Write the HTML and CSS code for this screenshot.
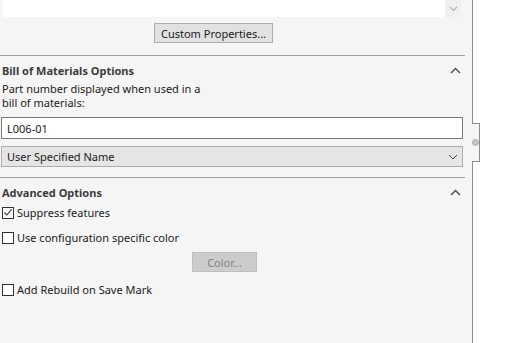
FILE: index.html
```html
<!DOCTYPE html>
<html lang="en">
<head>
    <meta charset="UTF-8">
    <title>Configuration Properties</title>
    <link rel="stylesheet" href="styles.css">
</head>
<body>
    <div class="panel">
        <div class="notes">
            <div class="notes-scroll">
                <svg width="9" height="6" viewBox="0 0 9 6"><path d="M1 1 L4.5 4.5 L8 1" fill="none" stroke="#b4b4b4" stroke-width="1.2"/></svg>
            </div>
        </div>
        <button class="btn props-btn">Custom Properties...</button>

        <div class="section">
            <div class="section-head">
                <span>Bill of Materials Options</span>
                <svg class="collapse" width="11" height="7" viewBox="0 0 11 7"><path d="M1 6 L5.5 1.5 L10 6" fill="none" stroke="#555" stroke-width="1.5"/></svg>
            </div>
            <p class="hint">Part number displayed when used in a<br>bill of materials:</p>
            <input class="text-field" type="text" value="L006-01">
            <div class="dropdown">
                <span>User Specified Name</span>
                <svg width="10" height="6" viewBox="0 0 10 6"><path d="M1 1 L5 5 L9 1" fill="none" stroke="#444" stroke-width="1"/></svg>
            </div>
        </div>

        <div class="section advanced">
            <div class="section-head">
                <span>Advanced Options</span>
                <svg class="collapse" width="11" height="7" viewBox="0 0 11 7"><path d="M1 6 L5.5 1.5 L10 6" fill="none" stroke="#555" stroke-width="1.5"/></svg>
            </div>
            <label class="check">
                <span class="box">
                    <svg width="11" height="11" viewBox="0 0 11 11"><path d="M1.5 5.5 L4.2 8.3 L9.5 2" fill="none" stroke="#333" stroke-width="1.2"/></svg>
                </span>
                Suppress features
            </label>
            <label class="check">
                <span class="box"></span>
                Use configuration specific color
            </label>
            <button class="btn color-btn" disabled>Color...</button>
            <label class="check">
                <span class="box"></span>
                Add Rebuild on Save Mark
            </label>
        </div>

        <div class="tab"><span class="tab-dot"></span></div>
    </div>
</body>
</html>
```

FILE: styles.css
```css
body {
    margin: 0;
    background-color: #ffffff;
    font-family: "Noto Sans", "Open Sans", sans-serif;
    font-size: 11px;
    color: #1a1a1a;
}

.panel {
    position: relative;
    width: 472px;
    height: 343px;
    background-color: #f5f5f5;
    border-right: 1px solid #8c8c8c;
}

.notes {
    margin-left: 3px;
    width: 458px;
    height: 17px;
    background-color: #ffffff;
    display: flex;
    justify-content: flex-end;
}

.notes-scroll {
    width: 16px;
    background-color: #f0f0f0;
    display: flex;
    align-items: center;
    justify-content: center;
}

.btn {
    font-family: inherit;
    font-size: 11px;
    padding: 0;
    height: 20px;
    background-color: #e1e1e1;
    border: 1px solid #adadad;
    color: #1a1a1a;
}

.props-btn {
    display: block;
    margin: 6px 0 0 154px;
    width: 119px;
}

.section {
    margin-top: 12px;
    border-top: 1px solid #a0a0a0;
    width: 465px;
}

.section.advanced {
    margin-top: 10px;
}

.section-head {
    display: flex;
    justify-content: space-between;
    align-items: center;
    height: 16px;
    margin-top: 6px;
    font-weight: bold;
    color: #3c3c3c;
    padding-left: 2px;
    padding-right: 4px;
}

.hint {
    margin: 4px 0 0 2px;
    line-height: 14px;
}

.text-field {
    display: block;
    box-sizing: border-box;
    margin: 7px 0 0 1px;
    width: 462px;
    height: 22px;
    border: 1px solid #7a7a7a;
    background-color: #ffffff;
    font-family: inherit;
    font-size: 11px;
    padding: 0 5px;
    color: #1a1a1a;
}

.dropdown {
    box-sizing: border-box;
    margin: 7px 0 0 1px;
    width: 462px;
    height: 21px;
    background-color: #e5e5e5;
    border: 1px solid #adadad;
    display: flex;
    align-items: center;
    justify-content: space-between;
    padding: 0 4px 0 5px;
}

.check {
    display: flex;
    align-items: center;
    gap: 3px;
    height: 13px;
    margin-top: 6px;
    margin-left: 2px;
}

.check + .check {
    margin-top: 12px;
}

.box {
    box-sizing: border-box;
    width: 12px;
    height: 12px;
    border: 1px solid #333333;
    background-color: #ffffff;
    display: flex;
    align-items: center;
    justify-content: center;
}

.color-btn {
    display: block;
    margin: 8px 0 0 192px;
    width: 65px;
    background-color: #cccccc;
    border-color: #bfbfbf;
    color: #838383;
}

.color-btn + .check {
    margin-top: 11px;
}

.tab {
    position: absolute;
    left: 472px;
    top: 123px;
    width: 8px;
    height: 39px;
    box-sizing: border-box;
    background-color: #f5f5f5;
    border: 1px solid #8c8c8c;
    border-left: none;
    display: flex;
    align-items: center;
    justify-content: center;
}

.tab-dot {
    width: 5px;
    height: 5px;
    border-radius: 50%;
    background-color: #c8c8c8;
    border: 1px solid #a8a8a8;
}
```
